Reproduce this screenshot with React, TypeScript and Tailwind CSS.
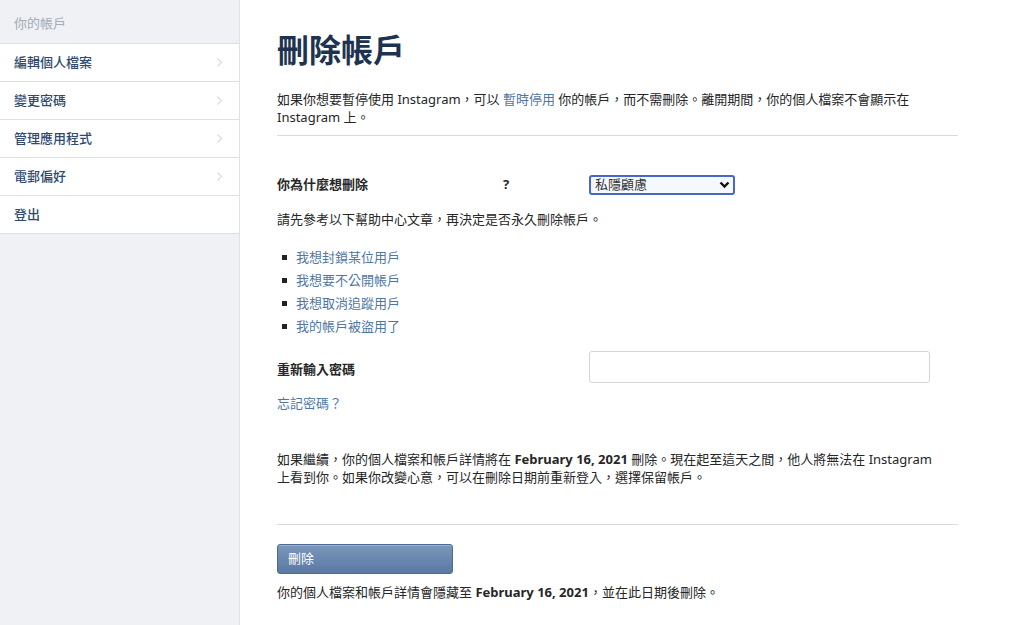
import React from 'react';

const font = { fontFamily: '"Noto Sans", "Noto Sans CJK TC", sans-serif' };

const navItems = ['編輯個人檔案', '變更密碼', '管理應用程式', '電郵偏好', '登出'];
const helpLinks = ['我想封鎖某位用戶', '我想要不公開帳戶', '我想取消追蹤用戶', '我的帳戶被盜用了'];

const Chevron: React.FC = () => (
    <svg width="7" height="11" viewBox="0 0 7 11" className="text-[#dcdcdc]">
        <path d="M1.5 1.5 L5.5 5.5 L1.5 9.5" fill="none" stroke="currentColor" strokeWidth="1.2" />
    </svg>
);

const Sidebar: React.FC = () => (
    <aside className="w-[240px] shrink-0 bg-[#eff1f4] border-r border-[#dfe1e4] min-h-[625px]">
        <div className="h-[44px] flex items-center pl-[14px] pt-[5px] text-[13px] text-[#a3acb7] border-b border-[#dcdfe3]">
            你的帳戶
        </div>
        {navItems.map((item, i) => (
            <div
                key={item}
                className="h-[38px] bg-white flex items-center justify-between pl-[14px] pr-[16px] border-b border-[#dcdfe3] text-[13px] font-medium text-[#2f4a6e]"
            >
                <span>{item}</span>
                {i < navItems.length - 1 && <Chevron />}
            </div>
        ))}
    </aside>
);

const DeleteAccount: React.FC = () => (
    <main className="pl-[37px] pt-[30px] text-[13px] text-[#262626] w-[718px]">
        <h1 className="text-[32px] leading-[40px] font-bold text-[#1e3350]">刪除帳戶</h1>

        <p className="mt-[20px] leading-[18px]">
            如果你想要暫停使用 Instagram，可以 <span className="text-[#4f77a3]">暫時停用</span> 你的帳戶，而不需刪除。離開期間，你的個人檔案不會顯示在
            <br />
            Instagram 上。
        </p>

        <div className="mt-[9px] border-t border-[#dbdbdb]" />

        <div className="mt-[39px] flex items-center h-[20px]">
            <div className="w-[226px] font-bold">你為什麼想刪除</div>
            <div className="w-[86px] font-bold">?</div>
            <div className="w-[146px] h-[20px] border-2 border-[#4767c9] rounded-[3px] bg-[#f5f8fd] flex items-center justify-between pl-[4px] pr-[3px] text-[13px] text-[#333]">
                <span>私隱顧慮</span>
                <svg width="11" height="8" viewBox="0 0 11 8">
                    <path d="M1.5 1.5 L5.5 5.5 L9.5 1.5" fill="none" stroke="#111" strokeWidth="2.4" />
                </svg>
            </div>
        </div>

        <p className="mt-[15px] leading-[18px]">請先參考以下幫助中心文章，再決定是否永久刪除帳戶。</p>

        <ul className="mt-[18px] pl-[5px]">
            {helpLinks.map((link) => (
                <li key={link} className="flex items-center h-[23px]">
                    <span className="w-[5px] h-[5px] bg-[#222] mr-[9px]" />
                    <span className="text-[#4f77a3]">{link}</span>
                </li>
            ))}
        </ul>

        <div className="mt-[13px] flex items-center">
            <div className="w-[312px] font-bold pt-[5px]">重新輸入密碼</div>
            <input className="w-[341px] h-[32px] border border-[#d5d5d5] rounded-[3px] bg-white outline-none px-2" type="password" />
        </div>

        <p className="mt-[11px] leading-[18px] text-[#4f77a3]">忘記密碼？</p>

        <p className="mt-[38px] leading-[18px]">
            如果繼續，你的個人檔案和帳戶詳情將在 <b>February 16, 2021</b> 刪除。現在起至這天之間，他人將無法在 Instagram
            <br />
            上看到你。如果你改變心意，可以在刪除日期前重新登入，選擇保留帳戶。
        </p>

        <div className="mt-[38px] border-t border-[#dbdbdb]" />

        <button className="mt-[19px] w-[176px] h-[30px] rounded-[3px] border border-[#4d6a92] bg-gradient-to-b from-[#7a96bb] to-[#5a79a3] text-left pl-[10px] text-white text-[13px] shadow-[inset_0_1px_0_rgba(255,255,255,0.25)]">
            刪除
        </button>

        <p className="mt-[9px] leading-[18px]">
            你的個人檔案和帳戶詳情會隱藏至 <b>February 16, 2021</b>，並在此日期後刪除。
        </p>
    </main>
);

export default function App() {
    return (
        <div className="flex w-[1024px] h-[625px] overflow-hidden bg-white" style={font}>
            <Sidebar />
            <DeleteAccount />
        </div>
    );
}
